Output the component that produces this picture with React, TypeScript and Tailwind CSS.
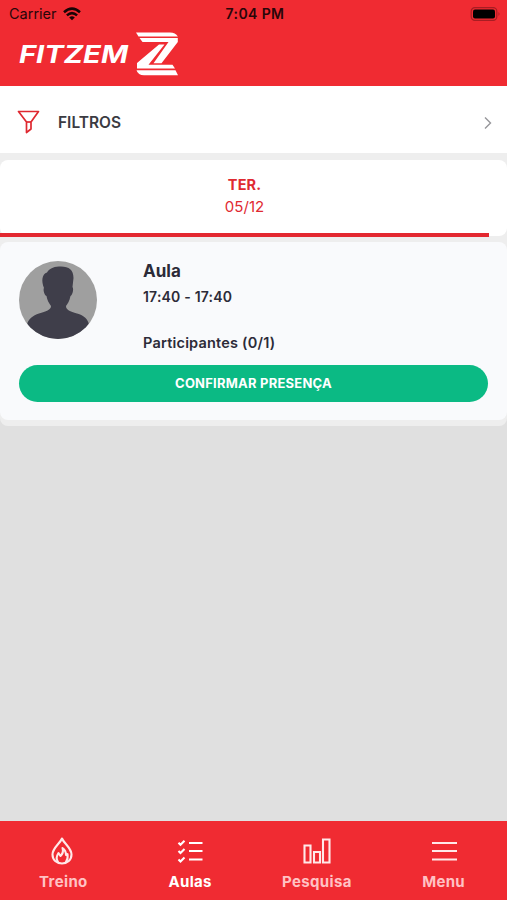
import React from "react";
import clsx from "clsx";

const tabs = [
  { id: "treino", label: "Treino", spacing: "tracking-[0.35px]" },
  { id: "aulas", label: "Aulas", spacing: "tracking-[0.3px]" },
  { id: "pesquisa", label: "Pesquisa", spacing: "tracking-[0.35px]" },
  { id: "menu", label: "Menu", spacing: "tracking-[0.3px]" },
];

const Logo = () => (
  <svg width="162" height="46" viewBox="0 0 162 46" className="block" fill="#fff">
    <text
      x="0"
      y="30.5"
      textLength="109"
      lengthAdjust="spacingAndGlyphs"
      className="font-['Inter'] text-[24px] font-bold italic"
    >
      FITZEM
    </text>
    <g>
      <path d="M117 0.500H151Q156.500 0.500 158.800 4.500H119.500Z" />
      <path d="M120.500 6H158.800V10L142.500 31.200H134.500L149.500 10H123.500Z" />
      <path d="M140 12.500H145.500L129.500 32.800H153.500L156 36.600H118V31Z" />
      <path d="M117.500 38.200H156.500L159 43.200H125Q119 43.200 117.500 38.200Z" />
    </g>
  </svg>
);

const WifiIcon = () => (
  <svg width="18" height="14" viewBox="0 0 18 14" fill="none" stroke="#180405" strokeWidth="2.5">
    <path d="M1 5.200Q9 -2 17 5.200" />
    <path d="M3.900 8.400Q9 3.800 14.100 8.400" />
    <path d="M9 13.300L6.200 10.500Q9 8.200 11.800 10.500Z" fill="#180405" stroke="none" />
  </svg>
);

const BatteryIcon = () => (
  <svg width="31" height="14" viewBox="0 0 31 14">
    <rect x="1.200" y="0.700" width="25.600" height="12.600" rx="3.600" fill="none" stroke="#a81d23" strokeWidth="1.200" />
    <rect x="3" y="2.500" width="22" height="9" rx="2" fill="#000" />
    <path d="M28.500 5Q30.500 7 28.500 9Z" fill="#a81d23" />
  </svg>
);

const FilterIcon = () => (
  <svg width="24" height="24" viewBox="0 0 24 24" fill="none" stroke="#df2830" strokeWidth="1.7" strokeLinejoin="round">
    <path d="M1.500 1.500H21.500L14 12V19L9.500 22.500V12Z" />
    <path d="M9.500 12H14" />
  </svg>
);

const Avatar = () => (
  <svg width="78" height="78" viewBox="0 0 78 78" className="rounded-full bg-[#9f9f9f]" fill="#3f3e4a">
    <path d="M25 27C22 20 23 13 28 11.500C31 6.500 36 5.500 42 5.500C50 5.500 54.500 9 54.500 17L53.500 26C55 28 53.500 34 51.500 35C50.500 40 48.500 43 47 45C47 49 51 50.500 58 52.500C65 54.500 69 58 70 64V78H8V64C9 58 14 54.500 20 52.500C27 50.500 32 49 32 45C30 42 28 39 27.500 35C25 34 24 28 25 27Z" />
  </svg>
);

const TabIcon = ({ id }: { id: string }) => {
  if (id === "treino") {
    return (
      <svg width="28" height="30" viewBox="0 0 28 30" fill="none" stroke="currentColor" strokeWidth="2.1" strokeLinejoin="round" strokeLinecap="round" className="-ml-0.5">
        <path d="M14 2.500C12 7.500 4.500 12 4.500 18.500C4.500 24 8.500 27.500 14 27.500S23.500 24 23.500 18.500C23.500 12 16 7.500 14 2.500Z" />
        <path d="M10 26C7.500 22.500 8.500 20 10.500 17L12.500 20C15 17.500 15.500 15 14.500 12C18 14.500 18 17 18 19L19.500 18C20 21.500 19.500 24 18 26" />
      </svg>
    );
  }
  if (id === "aulas") {
    return (
      <svg width="28" height="30" viewBox="0 0 28 30" fill="none" stroke="currentColor" strokeWidth="2.1">
        <path d="M2.500 6.800L4.500 8.800L8.500 4.800M2.500 15L4.500 17L8.500 13M2.500 23.500L4.500 25.500L8.500 21.500M13 7H26.500M13 15H26.500M13 23.500H26.500" />
      </svg>
    );
  }
  if (id === "pesquisa") {
    return (
      <svg width="28" height="30" viewBox="0 0 28 30" fill="none" stroke="currentColor" strokeWidth="2.100">
        <path d="M1.500 9.500H7.500V26.500H1.500ZM11 16H17V26.500H11ZM20 3.500H26.500V26.500H20Z" />
      </svg>
    );
  }
  return (
    <svg width="28" height="30" viewBox="0 0 28 30" stroke="currentColor" strokeWidth="2.100">
      <path d="M2 7H27M2 15H27M2 23.500H27" />
    </svg>
  );
};

const App = () => {
  const active = "aulas";

  return (
    <div className="flex h-[900px] w-[507px] flex-col overflow-hidden bg-[#e0e0e0] font-['Inter',sans-serif] text-[#2c2b38]">
      <header className="h-[86px] shrink-0 bg-[#f02b32]">
        {/* Status bar */}
        <div className="grid h-[27px] grid-cols-3 items-center pl-[9px] pr-1.5 text-[#280609]">
          <div className="flex items-center gap-1.5">
            <span className="text-[14.5px]">Carrier</span>
            <WifiIcon />
          </div>
          <span className="text-center text-[14px] font-semibold tracking-[0.4px]">7:04 PM</span>
          <div className="flex justify-end">
            <BatteryIcon />
          </div>
        </div>
        <div className="pl-[19px] pt-[5px]">
          <Logo />
        </div>
      </header>

      <button className="flex h-[67px] shrink-0 items-center bg-white pl-[17px] pr-[14px] pt-[5px]">
        <FilterIcon />
        <span className="ml-[17px] mt-px text-[15.5px] font-semibold text-[#3b3b42]">FILTROS</span>
        <svg width="10" height="14" viewBox="0 0 10 14" fill="none" stroke="#96969a" strokeWidth="1.4" className="ml-auto mt-0.5">
          <path d="M2 1.500L7.500 7L2 12.500" />
        </svg>
      </button>

      <main className="flex-1">
        <div className="rounded-b-lg bg-[#eeeeee] pb-1.5 pt-[7px]">
          {/* Day selector */}
          <div className="h-[76px] rounded-lg bg-white">
            <div className="flex h-[77px] w-[489px] flex-col items-center border-b-4 border-[#e32830] pt-[14px] text-[#df2a31]">
              <span className="text-[14.5px] font-bold leading-[22px] tracking-[0.1px]">TER.</span>
              <span className="text-[15px] leading-[22px] tracking-[0.1px]">05/12</span>
            </div>
          </div>

          {/* Class card */}
          <div className="mt-1.5 h-[178px] rounded-lg bg-[#f9fafc] px-[19px] pt-[19px]">
            <div className="flex h-[104px]">
              <Avatar />
              <div className="ml-[46px] flex flex-col">
                <h2 className="text-[17px] font-bold leading-5">Aula</h2>
                <span className="mt-1 text-[14px] font-semibold leading-[23px] tracking-[0.2px]">17:40 - 17:40</span>
                <span className="mt-[23px] text-[14.5px] font-semibold leading-[23px] tracking-[0.2px]">Participantes (0/1)</span>
              </div>
            </div>
            <button className="h-[37px] w-full rounded-full bg-[#0bba84] text-[13px] font-bold tracking-[0.22px] text-white">
              CONFIRMAR PRESENÇA
            </button>
          </div>
        </div>
      </main>

      <nav className="grid h-[79px] shrink-0 grid-cols-4 bg-[#f02b32]">
        {tabs.map((tab) => (
          <button
            key={tab.id}
            className={clsx("flex flex-col items-center pt-[15px]", tab.id === active ? "text-white" : "text-[#ffc2c4]")}
          >
            <span className={tab.id === active ? "text-white" : "text-[#ffe9e9]"}>
              <TabIcon id={tab.id} />
            </span>
            <span className={clsx("mt-[6px] text-[15px] font-bold leading-5", tab.spacing)}>{tab.label}</span>
          </button>
        ))}
      </nav>
    </div>
  );
};

export default App;
